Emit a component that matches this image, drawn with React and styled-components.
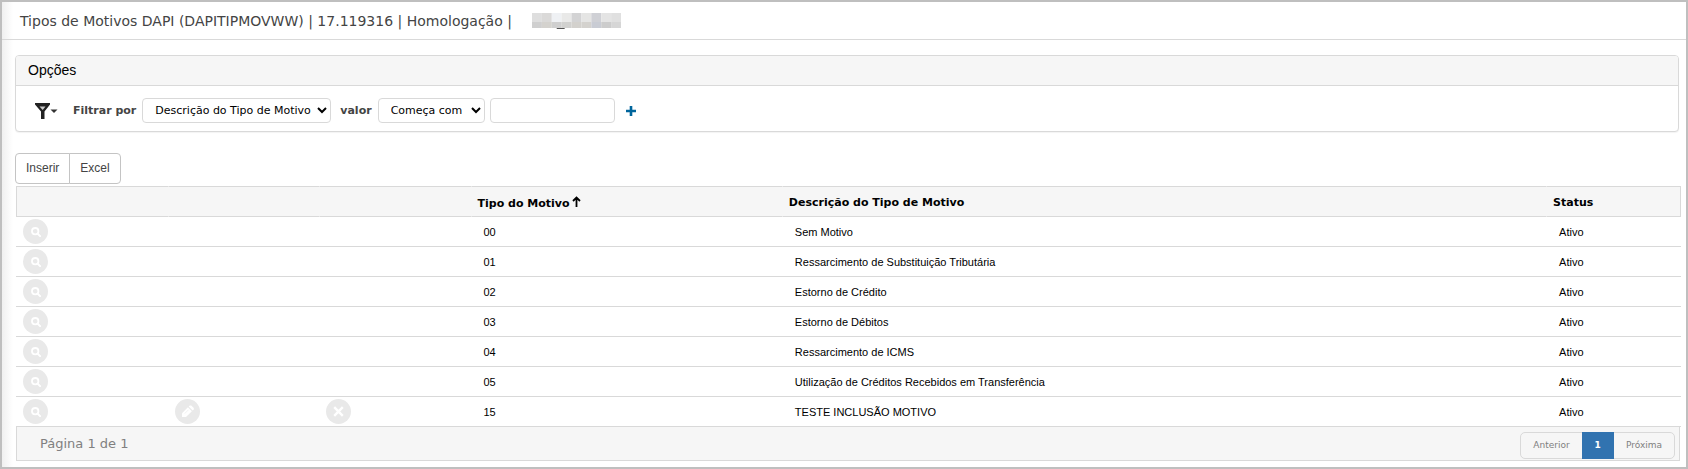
import React from 'react';
import styled, { createGlobalStyle, css } from 'styled-components';

const verdana = '"DejaVu Sans", Verdana, sans-serif';
const arial = '"Liberation Sans", Arial, sans-serif';

const line = '#d9d9d9';

const GlobalStyle = createGlobalStyle`
  *, *::before, *::after {
    box-sizing: border-box;
  }

  body {
    margin: 0;
    background: #fff;
    color: #000;
    font-family: ${verdana};
    font-size: 11px;
  }
`;

const Frame = styled.div`
  min-height: 100vh;
  border: 2px solid #bfbfbf;
  background: linear-gradient(to right, #f0f0f0, #fff 11px);
`;

const Header = styled.header`
  display: flex;
  align-items: center;
  gap: 20px;
  height: 38px;
  padding: 0 18px;
  border-bottom: 1px solid ${line};
`;

const Title = styled.h1`
  margin: 0;
  color: #444;
  font-size: 14px;
  font-weight: normal;
  white-space: nowrap;
`;

const Main = styled.main`
  padding: 15px 7px 6px 13px;
`;

const Panel = styled.section`
  border: 1px solid ${line};
  border-radius: 4px;
  background: #fff;
  box-shadow: 0 1px 1px rgba(0, 0, 0, 0.05);
`;

const PanelTitle = styled.h2`
  margin: 0;
  padding: 0 12px;
  border-bottom: 1px solid ${line};
  border-radius: 3px 3px 0 0;
  background: #f6f6f6;
  font-family: ${arial};
  font-size: 14px;
  font-weight: normal;
  line-height: 29px;
`;

const Filters = styled.form`
  display: flex;
  align-items: center;
  height: 45px;
  padding: 3px 0 0 18px;
`;

const PlainButton = styled.button`
  display: flex;
  align-items: center;
  padding: 2px 0 0;
  border: 0;
  background: none;
  cursor: pointer;
`;

const FilterMenu = styled(PlainButton)`
  margin-right: 15px;
`;

const Label = styled.label`
  margin-right: 6px;
  color: #444;
  font-weight: bold;
`;

const field = css`
  height: 25px;
  border: 1px solid ${line};
  border-radius: 4px;
  background: #fff;
  color: #000;
  font-family: ${verdana};
  font-size: 11px;
`;

const Select = styled.select`
  ${field}
  width: ${(props) => props.$width}px;
  margin-right: ${(props) => props.$gap}px;
  padding: 0 0 0 8px;
`;

const Input = styled.input`
  ${field}
  width: 125px;
  margin-right: 11px;
  padding: 0 8px;
`;

const Toolbar = styled.div`
  display: flex;
  margin: 21px 0 2px;
`;

const ToolButton = styled.button`
  height: 31px;
  padding: 0 10px 2px;
  border: 1px solid #c4c4c4;
  background: #fff;
  color: #444;
  font-family: ${arial};
  font-size: 12px;
  cursor: pointer;

  &:first-child {
    border-radius: 4px 0 0 4px;
  }

  &:last-child {
    margin-left: -1px;
    border-radius: 0 4px 4px 0;
  }
`;

const Grid = styled.div`
  margin: 0 -2px 0 1px;
`;

const Table = styled.table`
  width: 100%;
  border-collapse: separate;
  border-spacing: 0;
  table-layout: fixed;
  background: #fff;
`;

const Col = styled.col`
  width: ${(props) => props.$width};
`;

const Th = styled.th`
  height: 31px;
  padding: 2px 0 0 6px;
  border-top: 1px solid ${line};
  border-bottom: 1px solid ${line};
  background: #f6f6f6;
  text-align: left;
  white-space: nowrap;

  &:first-child {
    border-left: 1px solid ${line};
  }

  &:last-child {
    border-right: 1px solid ${line};
  }

  & + & {
    border-left: 1px solid #f6f6f6;
  }
`;

const SortArrow = styled.svg`
  margin-left: 2px;
  vertical-align: 0;
`;

const Td = styled.td`
  height: 30px;
  padding: ${(props) => (props.$action ? '0 0 0 7px' : '0 0 0 13px')};
  border-bottom: 1px solid ${line};
  font-family: ${arial};
  white-space: nowrap;
`;

const RoundButton = styled.button`
  display: flex;
  align-items: center;
  justify-content: center;
  width: 25px;
  height: 25px;
  padding: 0;
  border: 0;
  border-radius: 50%;
  background: #e9e9e9;
  color: #fff;
  cursor: pointer;
`;

const Footer = styled.footer`
  display: flex;
  align-items: center;
  justify-content: space-between;
  height: 34px;
  margin-right: 1px;
  padding: 0 4px 0 23px;
  border: 1px solid ${line};
  border-top: 0;
  background: #f6f6f6;
  color: #808080;
  font-size: 13px;
`;

const Pager = styled.nav`
  display: flex;
  height: 27px;
  margin-top: 3px;
  border: 1px solid ${line};
  border-radius: 5px;
`;

const PageLink = styled.a`
  display: flex;
  align-items: center;
  margin: -1px 0;
  padding: ${(props) => (props.$current ? '0 13px' : '0 12px')};
  background: ${(props) => (props.$current ? '#3173b0' : 'none')};
  color: ${(props) => (props.$current ? '#fff' : '#808080')};
  font-size: 9px;
  font-weight: ${(props) => (props.$current ? 'bold' : 'normal')};
  text-decoration: none;
`;

const mosaicTop = ['#dedede', '#dad9d8', '#eff1f4', '#e9e9e8', '#d3d3d4', '#e5e5e4', '#cfd0d5', '#e4e4e4', '#e0e0e0'];
const mosaicBottom = ['#cfcfcf', '#d4d2ce', '#cfcfcf', '#d1d1cf', '#d3d1cd', '#d4d2ce', '#c9ccd4', '#cccccc', '#d6d6d6'];

const HiddenUser = () => (
  <svg width="89" height="16" viewBox="0 0 90 16" preserveAspectRatio="none" aria-hidden="true">
    {mosaicTop.map((fill, i) => <rect key={i} x={i * 10} width="10" height="9" fill={fill} />)}
    {mosaicBottom.map((fill, i) => <rect key={i} x={i * 10} y="9" width="10" height="6" fill={fill} />)}
    <rect x="25" y="15" width="8" height="1" fill="#555" />
  </svg>
);

const icons = {
  Consultar: (
    <svg width="10" height="10" viewBox="0 0 10 10" fill="none" stroke="currentColor" strokeWidth="1.8">
      <circle cx="4.2" cy="4.2" r="3.2" />
      <path d="M6.6 6.600l2.500 2.500" strokeWidth="2" strokeLinecap="round" />
    </svg>
  ),
  Alterar: (
    <svg width="13" height="13" viewBox="0 0 13 13" fill="currentColor">
      <path d="M1 8.200L6.900 2.300l4 4L5 12.100H1z" />
      <path d="M7.700 1.500L8.800.4h1.400l2.600 2.600v1.400l-1.100 1.100z" />
      <path d="M3.800 8.500l3.700-3.700" stroke="#e9e9e9" strokeWidth=".7" />
    </svg>
  ),
  Excluir: (
    <svg width="11" height="11" viewBox="0 0 11 11" stroke="currentColor" strokeWidth="2.4">
      <path d="M1.2 1.2l8.6 8.6M9.8 1.2L1.2 9.8" />
    </svg>
  ),
};

const rows = [
  { code: '00', description: 'Sem Motivo', status: 'Ativo' },
  { code: '01', description: 'Ressarcimento de Substituição Tributária', status: 'Ativo' },
  { code: '02', description: 'Estorno de Crédito', status: 'Ativo' },
  { code: '03', description: 'Estorno de Débitos', status: 'Ativo' },
  { code: '04', description: 'Ressarcimento de ICMS', status: 'Ativo' },
  { code: '05', description: 'Utilização de Créditos Recebidos em Transferência', status: 'Ativo' },
  { code: '15', description: 'TESTE INCLUSÃO MOTIVO', status: 'Ativo', editable: true },
];

const ActionCell = ({ name, visible }) => (
  <Td $action>
    {visible ? (
      <RoundButton type="button" aria-label={name} title={name}>
        {icons[name]}
      </RoundButton>
    ) : null}
  </Td>
);

const FilterBar = () => (
  <Filters onSubmit={(e) => e.preventDefault()}>
    <FilterMenu type="button" aria-label="Filtros">
      <svg width="24" height="17" viewBox="0 0 24 17">
        <path d="M1 0h15v1.500L10.500 8.500V16H7V8.500L1 1.500z" fill="#222" />
        <path d="M5.500 3.500h6L8.700 7z" fill="#ccc" />
        <path d="M16.500 6.500h7L20 10z" fill="#333" />
      </svg>
    </FilterMenu>
    <Label htmlFor="filter-field">Filtrar por</Label>
    <Select id="filter-field" $width={189} $gap={9}>
      <option>Descrição do Tipo de Motivo</option>
      <option>Tipo do Motivo</option>
    </Select>
    <Label htmlFor="filter-operator">valor</Label>
    <Select id="filter-operator" $width={107} $gap={5}>
      <option>Começa com</option>
      <option>Contém</option>
    </Select>
    <Input type="text" aria-label="Valor do filtro" />
    <PlainButton type="button" aria-label="Adicionar filtro">
      <svg width="10" height="10" viewBox="0 0 10 10">
        <path d="M5 0v10M0 5h10" stroke="#00659c" strokeWidth="2.6" />
      </svg>
    </PlainButton>
  </Filters>
);

const MotivosTable = () => (
  <Table>
    <colgroup>
      <Col $width="9.1%" />
      <Col $width="9.1%" />
      <Col $width="9.1%" />
      <Col $width="18.7%" />
      <Col $width="45.9%" />
      <Col />
    </colgroup>
    <thead>
      <tr>
        <Th />
        <Th />
        <Th />
        <Th>
          Tipo do Motivo
          <SortArrow width="9" height="11" viewBox="0 0 9 11" fill="none" stroke="#000" strokeWidth="1.8">
            <path d="M4.500 11V1.500M1 5l3.500-3.500L8 5" />
          </SortArrow>
        </Th>
        <Th>Descrição do Tipo de Motivo</Th>
        <Th>Status</Th>
      </tr>
    </thead>
    <tbody>
      {rows.map((row) => (
        <tr key={row.code}>
          <ActionCell name="Consultar" visible />
          <ActionCell name="Alterar" visible={row.editable} />
          <ActionCell name="Excluir" visible={row.editable} />
          <Td>{row.code}</Td>
          <Td>{row.description}</Td>
          <Td>{row.status}</Td>
        </tr>
      ))}
    </tbody>
  </Table>
);

const App = () => (
  <Frame>
    <GlobalStyle />
    <Header>
      <Title>Tipos de Motivos DAPI (DAPITIPMOVWW) | 17.119316 | Homologação |</Title>
      <HiddenUser />
    </Header>
    <Main>
      <Panel>
        <PanelTitle>Opções</PanelTitle>
        <FilterBar />
      </Panel>
      <Toolbar>
        <ToolButton type="button">Inserir</ToolButton>
        <ToolButton type="button">Excel</ToolButton>
      </Toolbar>
      <Grid>
        <MotivosTable />
        <Footer>
          <span>Página 1 de 1</span>
          <Pager aria-label="Paginação">
            <PageLink href="#anterior">Anterior</PageLink>
            <PageLink href="#1" $current aria-current="page">1</PageLink>
            <PageLink href="#proxima">Próxima</PageLink>
          </Pager>
        </Footer>
      </Grid>
    </Main>
  </Frame>
);

export default App;
